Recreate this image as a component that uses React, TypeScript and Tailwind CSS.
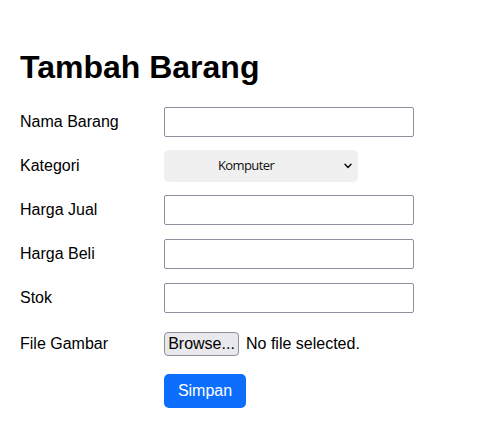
import { useState } from 'react';

type Field = {
	label: string;
	name: string;
};

const topFields: Field[] = [{ label: 'Nama Barang', name: 'nama' }];

const priceFields: Field[] = [
	{ label: 'Harga Jual', name: 'harga_jual' },
	{ label: 'Harga Beli', name: 'harga_beli' },
	{ label: 'Stok', name: 'stok' },
];

function TextRow({ field }: { field: Field }) {
	return (
		<div className="flex items-center h-[30px] mb-[14px]">
			<label htmlFor={field.name} className="w-[144px] text-[16px]">
				{field.label}
			</label>
			<input
				id={field.name}
				name={field.name}
				type="text"
				className="w-[250px] h-[30px] border border-[#8f8f9d] rounded-[2px] bg-white px-1 text-[16px] outline-none"
			/>
		</div>
	);
}

export default function App() {
	const [kategori, setKategori] = useState('Komputer');

	return (
		<div className="min-h-[434px] bg-white px-5 pt-[49px] text-black font-['Liberation_Sans',Arial,sans-serif]">
			<h1 className="text-[32px] font-bold leading-[37px] mb-[21px]">Tambah Barang</h1>

			<form onSubmit={(e) => e.preventDefault()}>
				{topFields.map((f) => (
					<TextRow key={f.name} field={f} />
				))}

				<div className="flex items-center h-[30px] mb-[14px]">
					<label htmlFor="kategori" className="w-[144px] text-[16px]">
						Kategori
					</label>
					<div className="relative">
						<select
							id="kategori"
							value={kategori}
							onChange={(e) => setKategori(e.target.value)}
							className="appearance-none w-[194px] h-[32px] rounded-[5px] bg-[#f0f0f0] pl-[54px] text-[13px] tracking-[-0.6px] text-[#111] outline-none font-['Open_Sans','Noto_Sans',sans-serif]"
						>
							<option>Komputer</option>
							<option>Laptop</option>
							<option>Aksesoris</option>
						</select>
						<svg
							className="absolute right-[6px] top-[13px] pointer-events-none"
							width="8"
							height="6"
							viewBox="0 0 8 6"
							fill="none"
						>
							<path d="M1 1.2 L4 4.4 L7 1.2" stroke="#111" strokeWidth="1.5" strokeLinecap="round" strokeLinejoin="round" />
						</svg>
					</div>
				</div>

				{priceFields.map((f) => (
					<TextRow key={f.name} field={f} />
				))}

				<div className="flex items-center h-[34px] mb-[13px]">
					<span className="w-[144px] text-[16px]">File Gambar</span>
					<button
						type="button"
						className="h-[24px] w-[75px] rounded-[4px] border border-[#8f8f9d] bg-[#e9e9ed] text-[16px] leading-none text-black"
					>
						Browse...
					</button>
					<span className="ml-[7px] text-[16px]">No file selected.</span>
				</div>

				<div className="flex">
					<button
						type="submit"
						className="ml-[144px] h-[34px] w-[82px] rounded-[5px] bg-[#0d6efd] text-[16px] text-white"
					>
						Simpan
					</button>
				</div>
			</form>
		</div>
	);
}
